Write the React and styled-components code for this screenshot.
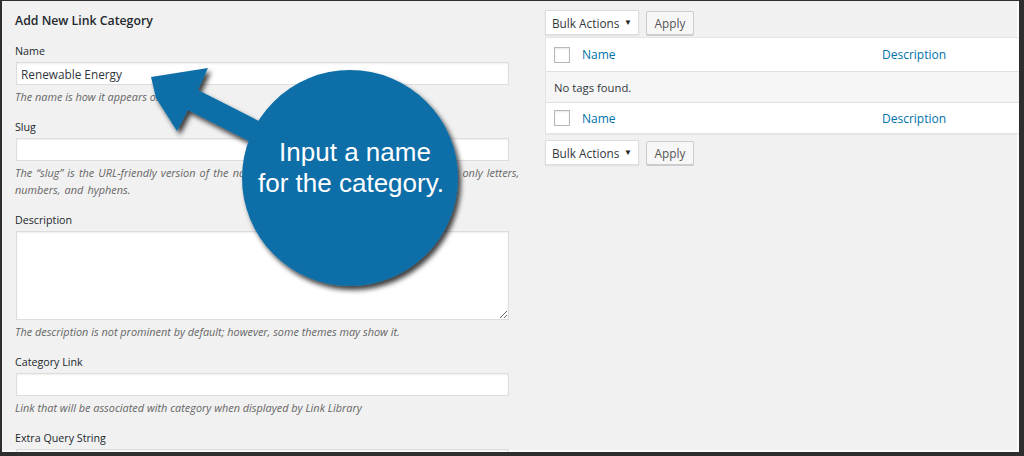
import React from 'react';
import styled, { createGlobalStyle } from 'styled-components';

const GlobalStyle = createGlobalStyle`
  html, body {
    margin: 0;
    padding: 0;
  }
  body {
    background: #f1f1f1;
    font-family: "Open Sans", "Noto Sans", sans-serif;
    color: #23282d;
  }
`;

const Frame = styled.div`
  position: relative;
  width: 1024px;
  height: 456px;
  box-sizing: border-box;
  overflow: hidden;
  background: #f1f1f1;
  border-style: solid;
  border-color: #2e2e2e;
  border-width: 1px 5px 4px 2px;
  box-shadow: inset -2px -2px 0 #fbfbfb;
  padding-left: 13px;
  display: grid;
  grid-template-columns: 494px 1fr;
  column-gap: 36px;
  align-items: start;
`;

const FormCol = styled.div`
  padding-top: 11px;
`;

const Title = styled.h2`
  margin: 0 0 12px;
  font-size: 12.3px;
  line-height: 18px;
  font-weight: 600;
  color: #23282d;
`;

const Field = styled.div`
  margin-bottom: 13px;
`;

const Label = styled.label`
  display: block;
  font-size: 10.7px;
  line-height: 18px;
  color: #23282d;
  margin-bottom: 2px;
`;

const TextInput = styled.input`
  display: block;
  box-sizing: border-box;
  width: 493px;
  height: 23px;
  margin: 0 0 0 1px;
  padding: 0 4px;
  border: 1px solid #dddddd;
  border-radius: 0;
  box-shadow: inset 0 1px 2px rgba(0, 0, 0, 0.07);
  background: #fff;
  font-family: "Open Sans", sans-serif;
  font-size: 11.8px;
  color: #32373c;
  outline: none;
`;

const TextArea = styled.textarea`
  display: block;
  box-sizing: border-box;
  width: 493px;
  height: 89px;
  margin: 0 0 0 1px;
  border: 1px solid #dddddd;
  border-radius: 0;
  box-shadow: inset 0 1px 2px rgba(0, 0, 0, 0.07);
  background: #fff;
  outline: none;
`;

const Hint = styled.p`
  margin: 3px 0 0;
  width: 530px;
  font-size: 10.9px;
  line-height: 17px;
  font-style: italic;
  color: #666;
  word-spacing: ${(p) => (p.wide ? '1.3px' : '0')};
`;

const ListCol = styled.div`
  padding-top: 9px;
  display: flex;
  flex-direction: column;
`;

const TableNav = styled.div`
  display: flex;
  align-items: center;
  gap: 7px;
  height: 25px;
  margin: ${(p) => (p.bottom ? '6px 0 0' : '0 0 2px')};
`;

const SelectBox = styled.div`
  box-sizing: border-box;
  width: 94px;
  height: 25px;
  padding: 0 6px;
  display: flex;
  align-items: center;
  justify-content: space-between;
  background: #fff;
  border: 1px solid #dddddd;
  box-shadow: 0 1px 2px rgba(0, 0, 0, 0.07);
  font-size: 11.8px;
  color: #32373c;
`;

const Caret = styled.span`
  font-size: 8px;
  color: #222;
  margin-top: -2px;
`;

const Button = styled.div`
  box-sizing: border-box;
  width: 48px;
  height: 24px;
  display: flex;
  align-items: center;
  justify-content: center;
  background: #f7f7f7;
  border: 1px solid #cccccc;
  box-shadow: 0 1px 0 #cccccc;
  border-radius: 2px;
  font-size: 11.8px;
  color: #555;
`;

const Table = styled.div`
  border: 1px solid #e5e5e5;
  border-right: none;
  box-shadow: 0 1px 1px rgba(0, 0, 0, 0.04);
  background: #fff;
`;

const Row = styled.div`
  box-sizing: border-box;
  display: grid;
  grid-template-columns: 36px 300px 1fr;
  align-items: center;
  height: ${(p) => p.h}px;
  background: ${(p) => (p.muted ? '#f6f6f6' : '#fff')};
  border-top: ${(p) => (p.first ? 'none' : '1px solid #e1e1e1')};
`;

const CheckCell = styled.div`
  padding-left: 8px;
  display: flex;
  align-items: center;
`;

const Checkbox = styled.span`
  display: block;
  box-sizing: border-box;
  width: 16px;
  height: 16px;
  border: 1px solid #b4b9be;
  background: #fff;
  box-shadow: inset 0 1px 2px rgba(0, 0, 0, 0.1);
`;

const ColHead = styled.a`
  font-size: 12px;
  color: #0073aa;
  text-decoration: none;
`;

const EmptyText = styled.div`
  grid-column: 1 / -1;
  padding-left: 8px;
  font-size: 11.3px;
  color: #32373c;
`;

const Overlay = styled.svg`
  position: absolute;
  top: -1px;
  left: -2px;
  width: 1024px;
  height: 456px;
  pointer-events: none;
`;

const Callout = () => (
  <Overlay viewBox="0 0 1024 456">
    <defs>
      <filter id="shadow" x="-20%" y="-20%" width="140%" height="140%">
        <feDropShadow dx="3" dy="4" stdDeviation="2.5" floodColor="#000" floodOpacity="0.75" />
      </filter>
    </defs>
    <g filter="url(#shadow)" fill="#0b6ea8">
      <polygon points="151,77 208,68 198,90 355,170 345,190 188,110 177,131 156,98" />
      <circle cx="350" cy="178" r="108" />
    </g>
    <text
      fill="#fff"
      fontFamily="'Liberation Sans', Arial, sans-serif"
      fontSize="26"
      textAnchor="middle"
    >
      <tspan x="355" y="161">Input a name</tspan>
      <tspan x="351" y="192">for the category.</tspan>
    </text>
  </Overlay>
);

const fields = [
  { label: 'Name', value: 'Renewable Energy', hint: ['The name is how it appears on your site.'] },
  {
    label: 'Slug',
    value: '',
    wide: true,
    hint: [
      'The \u201Cslug\u201D is the URL-friendly version of the name. It is usually all lowercase and contains only letters,',
      'numbers, and hyphens.',
    ],
  },
];

const App = () => (
  <>
    <GlobalStyle />
    <Frame>
      <FormCol>
        <Title>Add New Link Category</Title>
        {fields.map((f) => (
          <Field key={f.label}>
            <Label>{f.label}</Label>
            <TextInput defaultValue={f.value} />
            <Hint wide={f.wide}>
              {f.hint.map((line, i) => (
                <React.Fragment key={i}>
                  {i > 0 && <br />}
                  {line}
                </React.Fragment>
              ))}
            </Hint>
          </Field>
        ))}
        <Field>
          <Label>Description</Label>
          <TextArea />
          <Hint>The description is not prominent by default; however, some themes may show it.</Hint>
        </Field>
        <Field>
          <Label>Category Link</Label>
          <TextInput />
          <Hint>Link that will be associated with category when displayed by Link Library</Hint>
        </Field>
        <Field>
          <Label>Extra Query String</Label>
          <TextInput />
        </Field>
      </FormCol>

      <ListCol>
        <TableNav>
          <SelectBox>
            Bulk Actions <Caret>▼</Caret>
          </SelectBox>
          <Button>Apply</Button>
        </TableNav>
        <Table>
          <Row h={33} first>
            <CheckCell><Checkbox /></CheckCell>
            <ColHead>Name</ColHead>
            <ColHead>Description</ColHead>
          </Row>
          <Row h={31} muted>
            <EmptyText>No tags found.</EmptyText>
          </Row>
          <Row h={31}>
            <CheckCell><Checkbox /></CheckCell>
            <ColHead>Name</ColHead>
            <ColHead>Description</ColHead>
          </Row>
        </Table>
        <TableNav bottom>
          <SelectBox>
            Bulk Actions <Caret>▼</Caret>
          </SelectBox>
          <Button>Apply</Button>
        </TableNav>
      </ListCol>
      <Callout />
    </Frame>
  </>
);

export default App;
